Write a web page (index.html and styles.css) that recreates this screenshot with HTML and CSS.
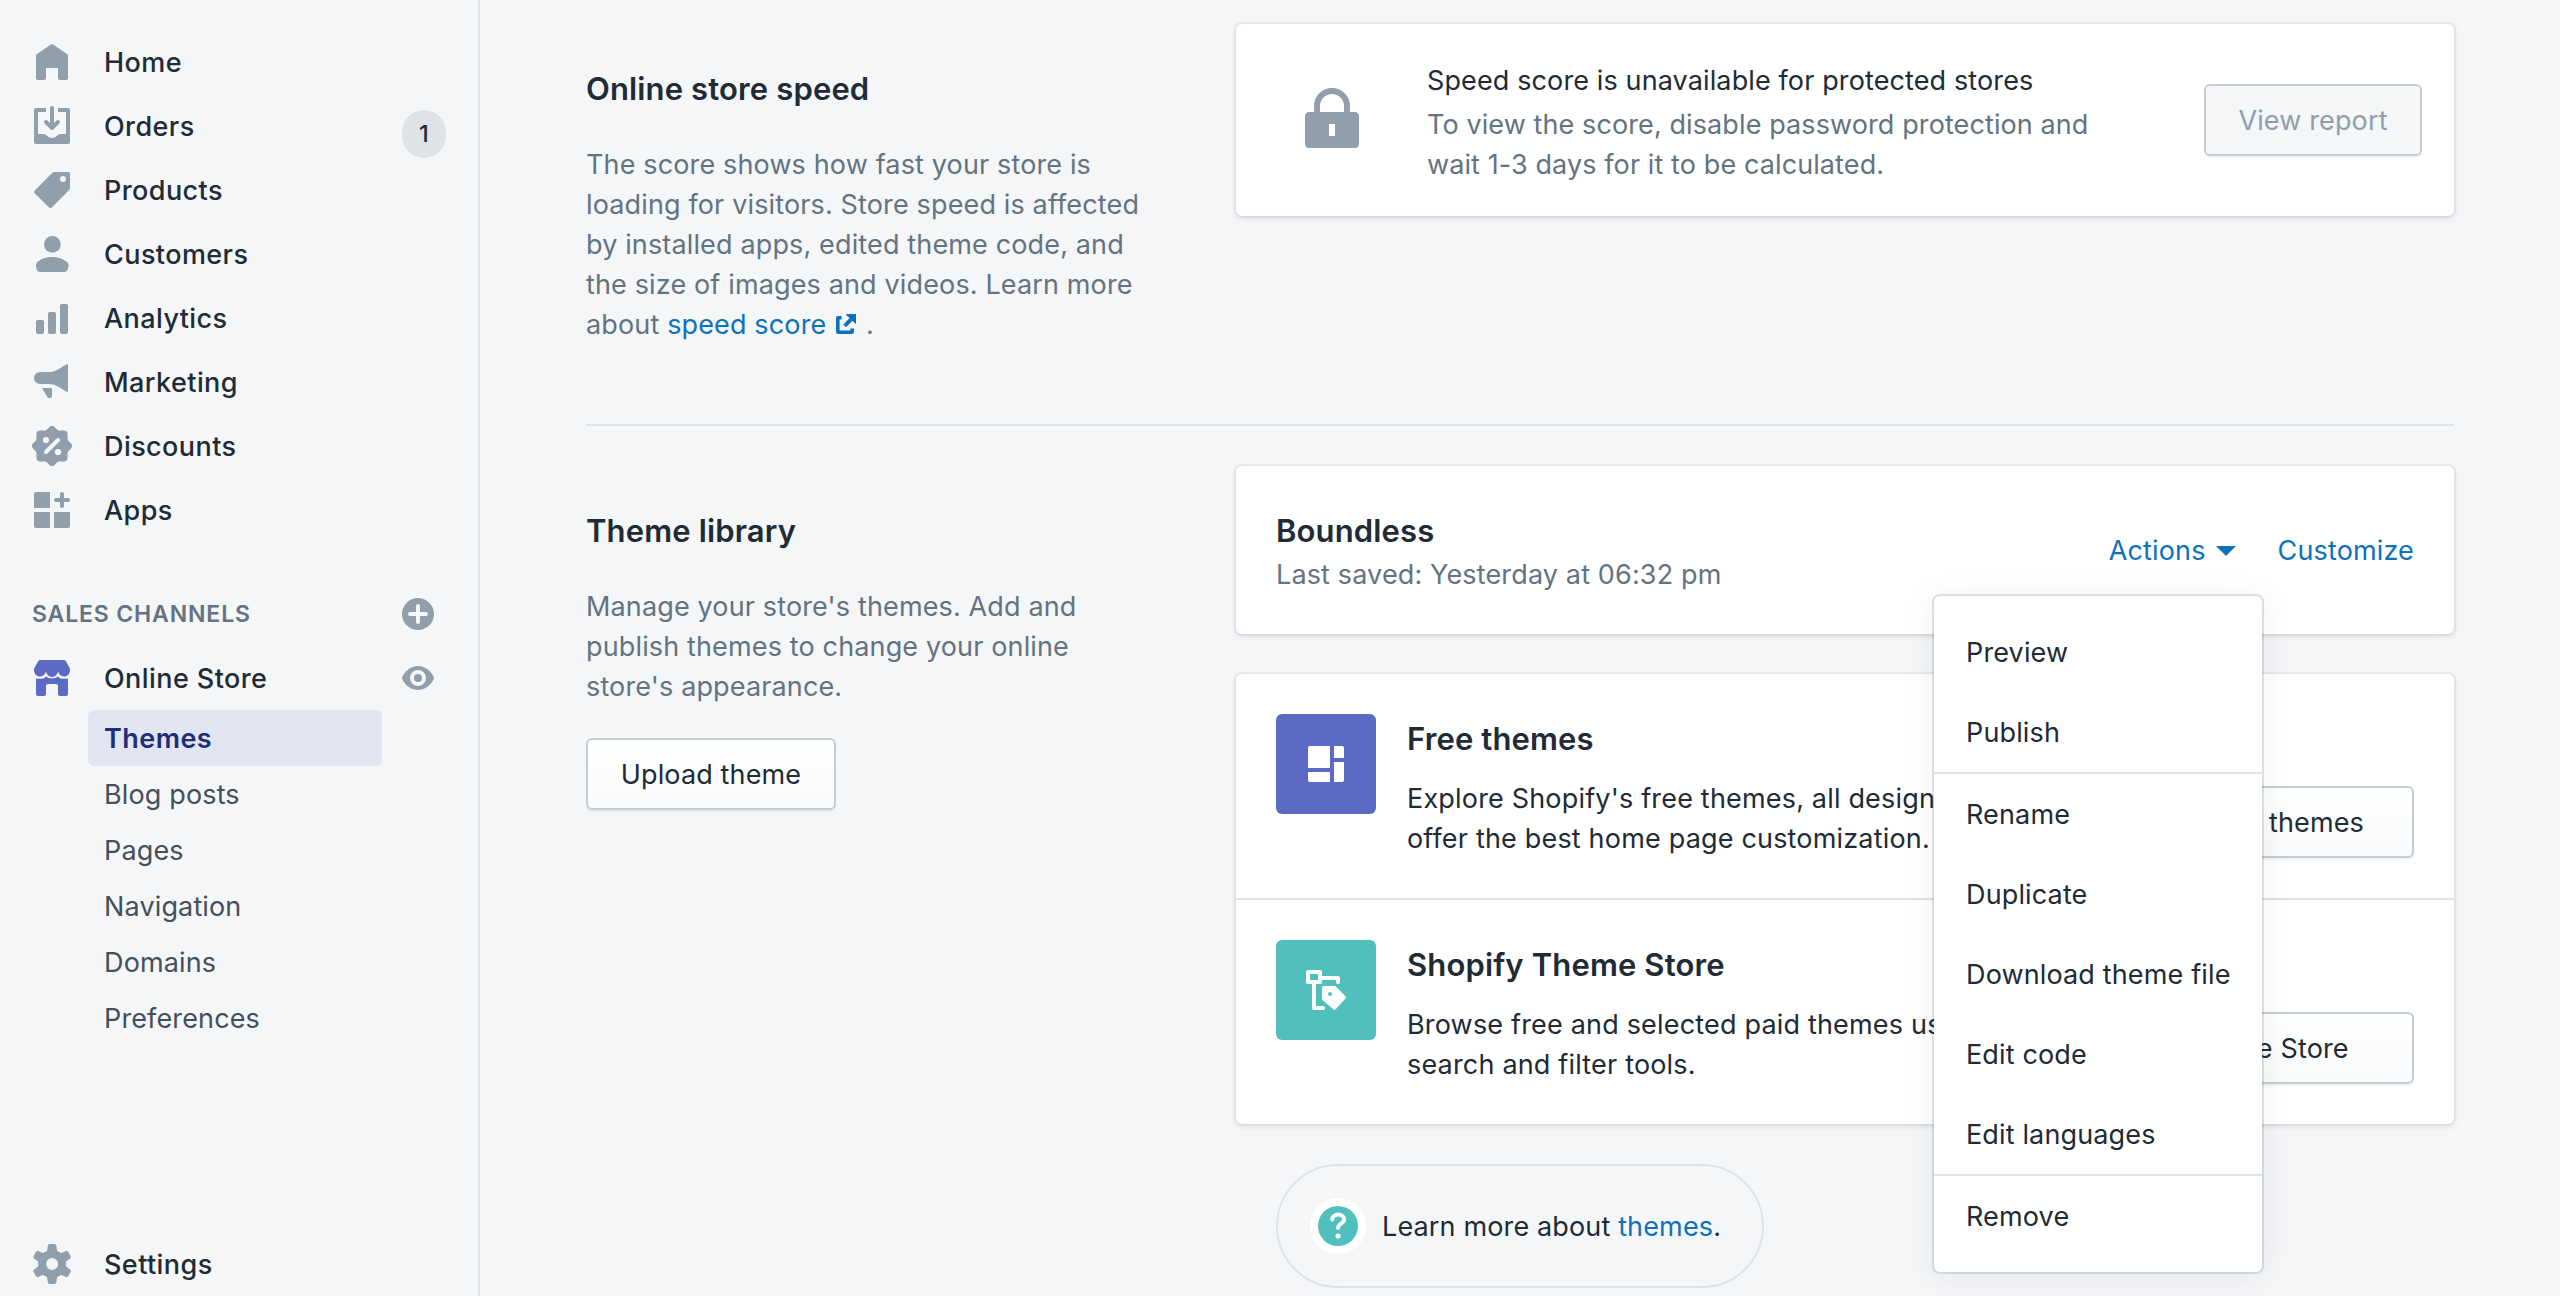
FILE: index.html
```html
<!DOCTYPE html>
<html lang="en">
<head>
<meta charset="utf-8">
<title>Themes</title>
<link rel="stylesheet" href="styles.css">
</head>
<body>
<div class="frame">
  <nav class="sidebar">
    <ul class="nav">
      <li class="nav-item"><svg class="icon" viewBox="0 0 20 20"><path d="M10.6 1.2 17.6 6.1Q18 6.4 18 6.9V18a1 1 0 0 1-1 1h-3a1 1 0 0 1-1-1v-5H7v5a1 1 0 0 1-1 1H3a1 1 0 0 1-1-1V6.9Q2 6.4 2.4 6.1L9.4 1.2Q10 .8 10.6 1.2z"/></svg><span>Home</span></li>
      <li class="nav-item"><svg class="icon" viewBox="0 0 20 20"><path d="M7 1v2H3v11h2.600c.9 0 1.400.4 2 1 .7.600 1.400 1 2.400 1s1.700-.4 2.400-1c.600-.6 1.100-1 2-1H17V3h-4V1h5a1 1 0 0 1 1 1v16a1 1 0 0 1-1 1H2a1 1 0 0 1-1-1V2a1 1 0 0 1 1-1z"/><path class="line" d="M10 1v9M7 8l3 3 3-3"/></svg><span>Orders</span><span class="badge">1</span></li>
      <li class="nav-item"><svg class="icon" viewBox="0 0 20 20"><path fill-rule="evenodd" d="M11.100 1H18.200Q19 1 19 1.800V9.200Q19 9.600 18.700 9.900L9.800 18.700Q9.200 19.300 8.600 18.700L1.300 11.600Q.7 11 1.300 10.400L10.300 1.300Q10.600 1 11.100 1zM15.500 3a1.500 1.500 0 1 0 0 3 1.500 1.500 0 0 0 0-3z"/></svg><span>Products</span></li>
      <li class="nav-item"><svg class="icon" viewBox="0 0 20 20"><circle cx="10.200" cy="5.200" r="4.200"/><path d="M10 11.500c3.500 0 6.200 1.200 7.800 2.900q.5.600.5 1.300c-.2 1.800-.7 3.300-2.600 3.300H4.500C2.700 19 2.100 17.600 2 15.700q0-.700.4-1.300c1.500-1.700 4.100-2.900 7.600-2.900z"/></svg><span>Customers</span></li>
      <li class="nav-item"><svg class="icon" viewBox="0 0 20 20"><rect x="2" y="11" width="4" height="7" rx="1"/><rect x="8" y="7" width="4" height="11" rx="1"/><rect x="14" y="3" width="4" height="15" rx="1"/></svg><span>Analytics</span></li>
      <li class="nav-item"><svg class="icon" viewBox="0 0 20 20"><path d="M4 5h4.500c3.200 0 5-1.600 8.600-3.800.4-.300.9-.200.900.3v13c0 .500-.500.600-.900.300C13.500 12.600 11.700 11 8.500 11H4a3 3 0 0 1 0-6zM5 13h4.300q.7 0 .7.700V17q0 1-1 1H8.500q-.6 0-.9-.600z"/></svg><span>Marketing</span></li>
      <li class="nav-item"><svg class="icon" viewBox="0 0 20 20"><rect x="2.200" y="2.200" width="15.600" height="15.600" rx="2"/><rect x="2.350" y="2.350" width="15.300" height="15.300" rx="2" transform="rotate(45 10 10)"/><g class="cut"><circle cx="7" cy="7" r="1.550"/><circle cx="13" cy="13" r="1.550"/><path d="M13 7l-6 6"/></g></svg><span>Discounts</span></li>
      <li class="nav-item"><svg class="icon" viewBox="0 0 20 20"><path d="M2 1h7v8H1V2a1 1 0 0 1 1-1zM1 11h8v8H2a1 1 0 0 1-1-1zM11 11h8v7a1 1 0 0 1-1 1h-7z"/><path class="line" d="M15 2v6M12 5h6"/></svg><span>Apps</span></li>
    </ul>

    <div class="channels-head"><span>SALES CHANNELS</span><svg class="add" viewBox="0 0 32 32"><circle cx="16" cy="16" r="16"/><path d="M16 8v16M8 16h16"/></svg></div>

    <div class="nav-item store"><svg class="icon indigo" viewBox="0 0 20 20"><path d="M4.200 1h11.700q.7 0 1 .5L18.700 4.700q.3.600.3 1.300a3 3 0 0 1-6 .5 3 3 0 0 1-6 0A3 3 0 0 1 1 6q0-.7.3-1.300L3.200 1.500q.3-.5 1-.5z"/><path d="M2 10.300c2 .300 4 .1 5-1.100 1.500 1.300 4.500 1.300 6 0 1 1.200 3 1.400 5 1.100V18a1 1 0 0 1-1 1h-3a1 1 0 0 1-1-1v-4q0-1-1-1H8q-1 0-1 1v4a1 1 0 0 1-1 1H3a1 1 0 0 1-1-1z"/></svg><span>Online Store</span><svg class="icon eye" viewBox="0 0 20 20"><path fill-rule="evenodd" d="M17.928 9.628C17.837 9.399 15.611 4 10 4S2.162 9.399 2.070 9.628a1.017 1.017 0 0 0 0 .744C2.163 10.601 4.389 16 10 16s7.837-5.399 7.928-5.628a1.017 1.017 0 0 0 0-.744zM10 6a4 4 0 1 1 0 8 4 4 0 0 1 0-8z"/><circle cx="10" cy="10" r="2"/></svg></div>
    <ul class="subnav">
      <li class="current">Themes</li>
      <li>Blog posts</li>
      <li>Pages</li>
      <li>Navigation</li>
      <li>Domains</li>
      <li>Preferences</li>
    </ul>

    <div class="nav-item settings"><svg class="icon" viewBox="0 0 20 20"><defs><path id="tooth" d="M7.300 5 7.900.9Q8 0 8.900 0h2.300q.9 0 1 .9L12.800 5z"/></defs><path fill-rule="evenodd" d="M10.050 3a7 7 0 1 1 0 14 7 7 0 0 1 0-14zM10.050 7a3 3 0 1 0 0 6 3 3 0 0 0 0-6z"/><use href="#tooth"/><use href="#tooth" transform="rotate(60 10.050 10)"/><use href="#tooth" transform="rotate(120 10.050 10)"/><use href="#tooth" transform="rotate(180 10.050 10)"/><use href="#tooth" transform="rotate(240 10.050 10)"/><use href="#tooth" transform="rotate(300 10.050 10)"/></svg><span>Settings</span></div>
  </nav>

  <main class="main">
    <section class="section speed">
      <div class="annotation">
        <h2>Online store speed</h2>
        <p>The score shows how fast your store is loading for visitors. Store speed is affected by installed apps, edited theme code, and the size of images and videos. Learn more about <a>speed score<svg class="external" viewBox="0 0 20 20"><path d="M5.600 3.700H2.300Q1.800 3.700 1.800 4.200V17.700Q1.800 18.200 2.300 18.200H15.700Q16.200 18.200 16.200 17.700V14.500"/><path class="head" d="M10.800 0H20V10.300L16.500 6.800 10 13.200 7.300 10.500 13.700 4.100 10.300 1.300Q10 0 10.800 0z"/></svg></a> .</p>
      </div>
      <div class="card score">
        <svg class="lock" viewBox="0 0 60 60"><path fill-rule="evenodd" d="M12 24V18a18 18 0 0 1 36 0v6h4.500q4.500 0 4.500 4.500v27q0 4.500-4.500 4.500h-45Q3 60 3 55.500v-27Q3 24 7.500 24zM18 24h24V18a12 12 0 0 0-24 0zM27 36v12h6V36z"/></svg>
        <div class="score-text"><h3>Speed score is unavailable for protected stores</h3><p>To view the score, disable password protection and wait 1-3 days for it to be calculated.</p></div>
        <button class="button disabled">View report</button>
      </div>
    </section>

    <section class="section library">
      <div class="annotation">
        <h2>Theme library</h2>
        <p>Manage your store's themes. Add and publish themes to change your online store's appearance.</p>
        <button class="button upload">Upload theme</button>
      </div>
      <div class="cards">
        <div class="card theme">
          <div class="theme-info"><h2>Boundless</h2><p>Last saved: Yesterday at 06:32 pm</p></div>
          <div class="theme-actions">
            <a class="actions">Actions<svg class="caret" viewBox="0 0 20 10"><path d="M0 0h20L10 10z"/></svg></a>
            <a>Customize</a>
            <div class="menu">
              <ul><li>Preview</li><li>Publish</li></ul>
              <ul><li>Rename</li><li>Duplicate</li><li>Download theme file</li><li>Edit code</li><li>Edit languages</li></ul>
              <ul><li>Remove</li></ul>
            </div>
          </div>
        </div>
        <div class="card">
          <div class="offer">
            <svg class="thumb free" viewBox="0 0 100 100"><path fill="#fff" d="M34 32h20v22H32V34q0-2 2-2zM32 58h22v10H34q-2 0-2-2zM58 32h8q2 0 2 2v10H58zM58 48h10v18q0 2-2 2h-8z"/></svg>
            <div class="offer-text"><h2>Free themes</h2><p>Explore Shopify's free themes, all designed to offer the best home page customization.</p></div>
            <button class="button">Explore free themes</button>
          </div>
          <div class="offer">
            <svg class="thumb paid" viewBox="0 0 100 100"><g fill="none" stroke="#fff" stroke-width="4" stroke-linejoin="round"><rect x="32" y="32" width="12" height="10"/><path d="M44 38h18v4M38 44v24h9" stroke-linecap="round"/></g><path fill="#fff" fill-rule="evenodd" d="M48 46h10.500q1 0 1.600.700L69.500 56.200q1 1.200 0 2.400L59.700 69.200q-1.200 1.300-2.400 0L46.700 60.300Q46 59.600 46 58.700V48q0-2 2-2zM54 52a2 2 0 1 0 0 4 2 2 0 0 0 0-4z"/></svg>
            <div class="offer-text"><h2>Shopify Theme Store</h2><p>Browse free and selected paid themes using search and filter tools.</p></div>
            <button class="button">Visit Theme Store</button>
          </div>
        </div>
        <div class="help"><svg class="question" viewBox="0 0 56 56"><circle cx="28" cy="28" r="28" fill="#fff"/><circle cx="28" cy="28" r="20" fill="#50bfbe"/><path d="M22.300 21.500a5.900 4.900 0 0 1 11.800 0c0 3.600-6.100 4.500-6.100 8.500" fill="none" stroke="#fff" stroke-width="4" stroke-linecap="round"/><circle cx="28" cy="38" r="2.600" fill="#fff"/></svg><p>Learn more about <a>themes</a>.</p></div>
      </div>
    </section>
  </main>
</div>
</body>
</html>
```
FILE: styles.css
```css
* { box-sizing: border-box; }
body, h2, h3, p, ul { margin: 0; padding: 0; }
ul { list-style: none; }
body {
  background: #f4f6f8;
  color: #212b36;
  font: 400 27px/40px Inter, "Liberation Sans", sans-serif;
  letter-spacing: 0.14px;
}
a { color: #0e71bb; }
h2 { font-size: 31px; font-weight: 600; line-height: 48px; }
h3 { font-size: inherit; font-weight: 400; letter-spacing: 0.12px; }
svg { display: block; flex: none; }

.frame { display: flex; height: 1296px; overflow: hidden; }

/* Sidebar */
.sidebar {
  flex: none;
  display: flex;
  flex-direction: column;
  width: 480px;
  padding: 30px 0 0 32px;
  border-right: 2px solid #dfe3e8;
}
.nav-item {
  display: flex;
  align-items: center;
  height: 64px;
  padding-right: 32px;
  font-weight: 500;
  letter-spacing: 0.42px;
}
.nav-item .icon { margin-right: 32px; }
.nav-item > span { padding-top: 2px; }
.icon { width: 40px; height: 40px; fill: #919eab; }
.icon.indigo { fill: #5c6ac4; }
.icon .line { fill: none; stroke: #919eab; stroke-width: 2; stroke-linecap: round; stroke-linejoin: round; }
.icon .cut { fill: #f4f6f8; stroke: none; }
.icon .cut path { stroke: #f4f6f8; stroke-width: 2; stroke-linecap: round; }
.nav-item .badge {
  width: 44px;
  height: 48px;
  margin: 16px 0 0 auto;
  padding: 0;
  border-radius: 24px;
  background: #dfe3e8;
  font-size: 23.5px;
  line-height: 48px;
  text-align: center;
}
.channels-head {
  display: flex;
  align-items: center;
  justify-content: space-between;
  height: 64px;
  margin-top: 40px;
  padding-right: 44px;
  color: #637381;
  font-size: 23px;
  font-weight: 600;
  letter-spacing: 0.86px;
}
.add { width: 32px; height: 32px; fill: #919eab; }
.add path { stroke: #f4f6f8; stroke-width: 4; stroke-linecap: round; }
.nav-item.store { padding-right: 40px; }
.nav-item .eye { margin: 0 0 0 auto; }
.subnav li {
  width: 294px;
  height: 56px;
  margin-left: 56px;
  padding: 1px 0 0 16px;
  border-radius: 6px;
  color: #454f5b;
  line-height: 56px;
}
.subnav .current {
  background: #e1e5f1;
  color: #202e78;
  font-weight: 600;
  letter-spacing: 0.45px;
}
.nav-item.settings { margin: auto 0 0; }

/* Main column */
.main { flex: none; width: 1868px; margin-left: 106px; }
.section { display: grid; grid-template-columns: 570px 1218px; column-gap: 80px; align-items: start; }
.speed { height: 426px; padding-top: 24px; border-bottom: 2px solid #dfe3e8; }
.library { padding-top: 40px; }
.annotation { padding-top: 41px; }
.annotation p { margin-top: 32px; color: #637381; }
.external { display: inline-block; width: 20px; height: 20px; margin: 0 2px 0 10px; }
.external path { fill: none; stroke: #0e71bb; stroke-width: 3.6; }
.external .head { fill: #0e71bb; stroke: none; }

.card {
  background: #fff;
  border-radius: 6px;
  box-shadow: 0 0 0 2px rgba(63, 63, 68, 0.05), 0 2px 6px rgba(63, 63, 68, 0.15);
}
.button {
  height: 72px;
  padding: 2px 32px 0;
  border: 2px solid #c4cdd5;
  border-radius: 6px;
  background: linear-gradient(#fff, #f9fafb);
  box-shadow: 0 2px 0 rgba(22, 29, 37, 0.05);
  color: #212b36;
  font: inherit;
  letter-spacing: inherit;
  white-space: nowrap;
}
.button.disabled { width: 218px; background: #f4f6f8; color: #919eab; }
.button.upload { width: 250px; margin-top: 31px; }

.score { display: flex; align-items: center; height: 192px; padding: 0 32px 0 66px; }
.lock { width: 60px; height: 64px; padding-bottom: 4px; fill: #919eab; }
.score-text { width: 690px; margin-left: 65px; padding-top: 6px; letter-spacing: 0.1px; }
.score-text p { margin-top: 4px; color: #637381; }
.score .button { margin-left: auto; }

.cards { display: flex; flex-direction: column; gap: 40px; }
.theme { display: flex; align-items: center; justify-content: space-between; height: 168px; padding: 0 40px; }
.theme-info { padding-top: 3px; }
.theme-info h2 { line-height: 46px; }
.theme-info p { margin-top: 1px; color: #637381; }
.theme-actions { position: relative; display: flex; gap: 42px; padding-top: 2px; }
.actions { display: flex; align-items: center; }
.caret { width: 20px; height: 10px; margin-left: 10px; fill: #0e71bb; }

/* Actions drop-down, laid over the cards below */
.menu {
  position: absolute;
  z-index: 1;
  top: 67px;
  right: 152px;
  width: 328px;
  border-radius: 6px;
  background: #fff;
  box-shadow: 0 0 0 2px rgba(6, 44, 82, 0.12), 0 4px 32px rgba(33, 43, 54, 0.08);
}
.menu ul { padding: 0 32px; }
.menu ul:first-child { padding-top: 16px; }
.menu ul:last-child { padding-bottom: 16px; }
.menu ul + ul { border-top: 2px solid #dfe3e8; }
.menu li { height: 80px; padding-top: 1px; line-height: 80px; white-space: nowrap; }

.offer { display: flex; align-items: center; height: 224px; padding: 0 40px; }
.offer + .offer { height: 226px; border-top: 2px solid #dfe3e8; }
.thumb { align-self: flex-start; width: 100px; height: 100px; margin-top: 40px; border-radius: 6px; }
.thumb.free { background: #5c6ac4; }
.thumb.paid { background: #50bfbe; }
.offer-text { width: 620px; margin-left: 31px; padding-top: 2px; }
.offer-text p { margin-top: 16px; letter-spacing: 0.18px; }
.offer .button { width: 359px; margin: 72px 0 0 auto; }

.help {
  display: flex;
  align-items: center;
  align-self: flex-start;
  width: 488px;
  height: 124px;
  margin-left: 40px;
  padding-left: 32px;
  border: 2px solid #dfe3e8;
  border-radius: 62px;
}
.help p { padding-top: 2px; }
.question { width: 56px; height: 56px; margin-right: 16px; }
```
